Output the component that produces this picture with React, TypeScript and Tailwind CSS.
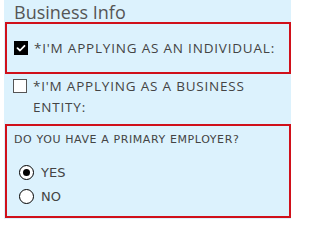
import { useState } from 'react'

function CheckBox({ checked }: { checked: boolean }) {
  return checked ? (
    <span className="flex h-[14px] w-[14px] shrink-0 items-center justify-center bg-black">
      <svg viewBox="0 0 14 14" className="h-[14px] w-[14px]">
        <path d="M3.5 7.2 L6 9.5 L10.5 4.8" fill="none" stroke="#fff" strokeWidth="1.8" strokeLinecap="round" strokeLinejoin="round" />
      </svg>
    </span>
  ) : (
    <span className="block h-[14px] w-[14px] shrink-0 border border-[#555] bg-white" />
  )
}

function Radio({ checked }: { checked: boolean }) {
  return (
    <span className="flex h-[15px] w-[15px] shrink-0 items-center justify-center rounded-full border-[1.5px] border-black bg-white">
      {checked && <span className="h-[7px] w-[7px] rounded-full bg-black" />}
    </span>
  )
}

export default function App() {
  const [employer, setEmployer] = useState<'yes' | 'no'>('yes')

  return (
    <div className="h-[224px] w-[300px] overflow-hidden bg-white font-['Open_Sans',sans-serif] text-[#444]">
      <div className="ml-[4px] h-[219px] w-[287px] bg-[#dcf2fd]">
        <h2 className="h-[22px] pl-[10px] text-[18px] leading-[24px] text-[#555]">Business Info</h2>

        <div className="ml-[1px] flex h-[52px] items-center gap-[6px] border-2 border-[#d0101a] pl-[7px]">
          <CheckBox checked />
          <span className="text-[13.5px] tracking-[0.8px] uppercase">*I'm applying as an individual:</span>
        </div>

        <div className="flex h-[50px] items-start gap-[6px] pl-[9px] pt-[5px]">
          <CheckBox checked={false} />
          <span className="-mt-[3px] text-[13.5px] leading-[21px] tracking-[0.8px] uppercase">
            *I'm applying as a business
            <br />
            entity:
          </span>
        </div>

        <div className="ml-[1px] h-[94px] border-2 border-[#d0101a] pl-[7px] pt-[7px] font-['DejaVu_Sans',sans-serif]">
          <p className="text-[11px] leading-[14px] tracking-[0.6px] text-[#444]">DO YOU HAVE A PRIMARY EMPLOYER?</p>
          <div className="mt-[18px] flex flex-col gap-[9px] pl-[5px]">
            <label className="flex items-center gap-[7px]" onClick={() => setEmployer('yes')}>
              <Radio checked={employer === 'yes'} />
              <span className="text-[13px] leading-[15px]">YES</span>
            </label>
            <label className="flex items-center gap-[7px]" onClick={() => setEmployer('no')}>
              <Radio checked={employer === 'no'} />
              <span className="text-[13px] leading-[15px]">NO</span>
            </label>
          </div>
        </div>
      </div>
    </div>
  )
}
